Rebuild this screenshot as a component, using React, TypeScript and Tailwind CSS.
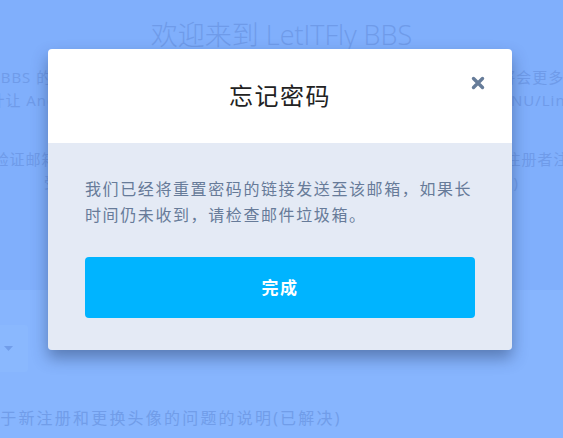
import { useState } from "react";

const heroLines = [
  "LetITFly BBS 的前身是一个以分享安卓应用与技术为主的中文社区论坛，今后也将会更多地关注新",
  "我们设计让 Android 用户与开发者都能在这里自由地讨论与交流，同时也欢迎 GNU/Linux 用户",
];

const noticeLines = [
  "请先验证邮箱后再发帖，如果一直收不到邮件请检查垃圾箱或联系管理员，新注册者注意了",
  "受限于服务器，部分地区可能无法正常访问本站，敬请谅解(已修复)",
];

function CloseIcon() {
  return (
    <svg width="14" height="14" viewBox="0 0 14 14" aria-hidden="true">
      <path d="M2.5 2.5 L11.5 11.5 M11.5 2.5 L2.5 11.5" stroke="#667c99" strokeWidth="3.4" strokeLinecap="round" />
    </svg>
  );
}

function ForgotPasswordModal({ onClose }: { onClose: () => void }) {
  return (
    <div className="w-[464px] overflow-hidden rounded-[4px] shadow-[0_8px_16px_rgba(30,50,90,0.45)]">
      <div className="relative flex h-[94px] items-center justify-center bg-white">
        <h3 className="text-[24px] font-normal tracking-[1.5px] text-[#222222]">忘记密码</h3>
        <button
          onClick={onClose}
          className="absolute right-[27px] top-[27px] flex h-[14px] w-[14px] items-center justify-center"
          title="关闭"
        >
          <CloseIcon />
        </button>
      </div>
      <div className="bg-[#e4eaf5] px-[37px] pb-[32px] pt-[33px]">
        <p className="text-[16px] leading-[26px] tracking-[1.6px] text-[#677b99]">
          我们已经将重置密码的链接发送至该邮箱，如果长时间仍未收到，请检查邮件垃圾箱。
        </p>
        <button
          onClick={onClose}
          className="mt-[29px] flex h-[61px] w-full items-center justify-center rounded-[4px] bg-[#00b4ff] text-[17px] font-bold tracking-[1.5px] text-white"
        >
          完成
        </button>
      </div>
    </div>
  );
}

export default function App() {
  const [open, setOpen] = useState(true);

  return (
    <div className="relative h-[438px] w-[563px] overflow-hidden font-['Open_Sans','Noto_Sans_CJK_SC',sans-serif]">
      <div className="flex h-full flex-col">
        <section className="h-[290px] shrink-0 bg-[#80affc] pt-[14px] text-center text-[#6f9be9]">
          <h1 className="text-[27px] font-light leading-[42px]">欢迎来到 LetITFly BBS</h1>
          <div className="mt-[10px] text-[15px] leading-[23px] tracking-[1px]">
            {heroLines.map((l, i) => (
              <div key={i} className="flex justify-center whitespace-nowrap">{l}</div>
            ))}
          </div>
          <div className="mt-[36px] text-[15px] leading-[23px] tracking-[1px]">
            {noticeLines.map((l, i) => (
              <div key={i} className="flex justify-center whitespace-nowrap">{l}</div>
            ))}
          </div>
        </section>

        <div className="flex flex-1 bg-[#87b5fe]">
          <div className="flex w-[28px] shrink-0 flex-col pt-[35px]">
            <div className="flex h-[47px] items-center justify-start rounded-r-[3px] bg-[#8ab8fe] pl-[4px]">
              <svg width="9" height="6" viewBox="0 0 9 6" aria-hidden="true">
                <path d="M0 0 L9 0 L4.5 5 Z" fill="#719de9" />
              </svg>
            </div>
          </div>
          <div className="ml-[-46px] flex flex-col pt-[114px] text-[16px] leading-[28px] tracking-[2.2px] text-[#719de9]">
            <div className="whitespace-nowrap">关于新注册和更换头像的问题的说明(已解决)</div>
          </div>
        </div>
      </div>

      {open && (
        <div className="absolute inset-0 flex items-start justify-start pl-[48px] pt-[49px]">
          <ForgotPasswordModal onClose={() => setOpen(false)} />
        </div>
      )}
    </div>
  );
}
